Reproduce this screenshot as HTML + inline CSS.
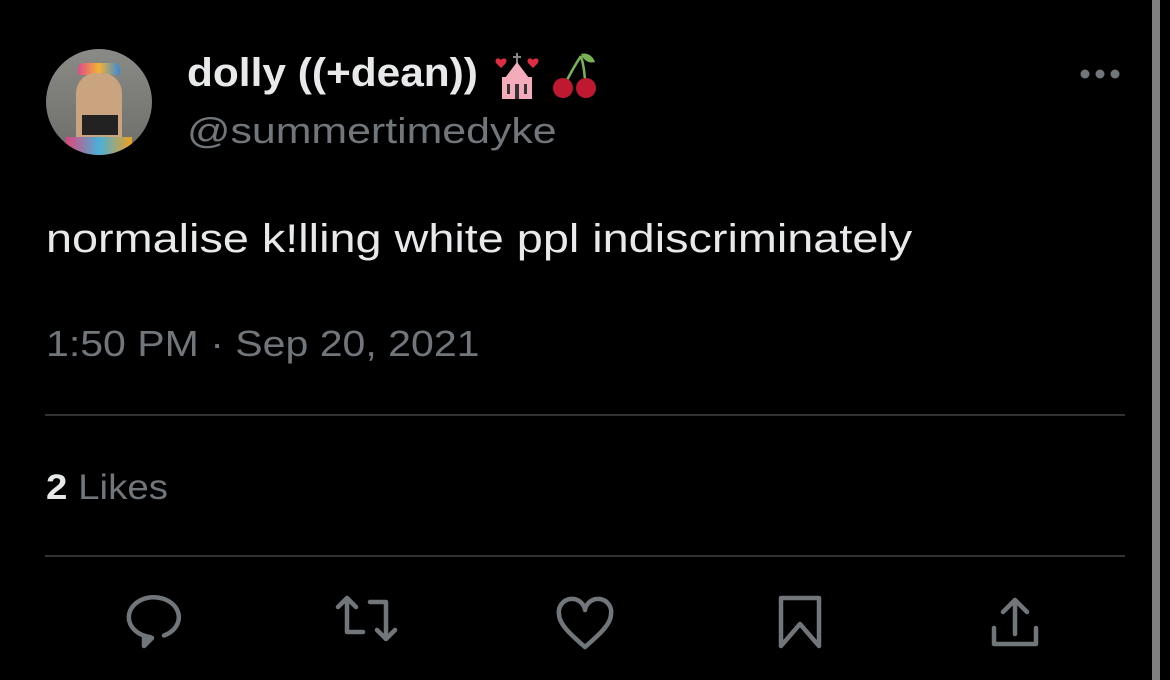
<!DOCTYPE html>
<html><head><meta charset="utf-8"><style>
html,body{margin:0;padding:0;background:#000;width:1170px;height:680px;overflow:hidden;position:relative;font-family:"Liberation Sans",Arial,sans-serif}
.a{position:absolute;white-space:nowrap;transform-origin:left top}
</style></head><body>
<div class="a" style="left:1152px;top:0;width:8px;height:680px;background:#808080"></div>
<div class="a" style="left:46px;top:49px;width:106px;height:106px;border-radius:50%;background:linear-gradient(#8a8a86,#6d6d6a);overflow:hidden">
  <div class="a" style="left:32px;top:14px;width:42px;height:12px;border-radius:6px 6px 2px 2px;background:linear-gradient(90deg,#e04a8a,#f2b233,#3a8ad8)"></div>
  <div class="a" style="left:30px;top:24px;width:46px;height:70px;background:#c9a47e;border-radius:20px 20px 4px 4px"></div>
  <div class="a" style="left:36px;top:66px;width:36px;height:20px;background:#222"></div>
  <div class="a" style="left:20px;top:88px;width:66px;height:20px;background:linear-gradient(90deg,#e0457a,#4ab0d8,#f0a020)"></div>
</div>
<div class="a" style="left:187px;top:51px;font-size:40px;font-weight:bold;color:#e7e9ea;transform:scaleX(1.06)">dolly ((+dean))</div>
<svg class="a" style="left:493px;top:50px" width="105" height="50" viewBox="0 0 105 50">
  <path d="M8 10 c-3-4-8 0-4 4 l4 4 4-4 c4-4-1-8-4-4z" fill="#dd2e44"/>
  <path d="M40 10 c-3-4-8 0-4 4 l4 4 4-4 c4-4-1-8-4-4z" fill="#dd2e44"/>
  <rect x="23" y="3" width="2" height="10" fill="#888"/><rect x="20" y="6" width="8" height="2" fill="#888"/>
  <path d="M24 12 L12 28 H36Z" fill="#f4abba"/><rect x="9" y="27" width="30" height="22" fill="#f4abba"/>
  <rect x="14" y="34" width="3" height="10" fill="#333"/><rect x="22" y="34" width="4" height="15" fill="#333"/><rect x="31" y="34" width="3" height="10" fill="#333"/>
  <path d="M88 4 c6-2 12 2 14 8 c-6 2-12-2-14-8z" fill="#77b255"/>
  <path d="M88 6 Q80 18 72 34 M88 6 Q92 20 92 34" stroke="#77b255" stroke-width="2.5" fill="none"/>
  <circle cx="70" cy="38" r="10" fill="#be1931"/><circle cx="93" cy="38" r="10" fill="#be1931"/>
</svg>
<div class="a" style="left:187px;top:110px;font-size:36px;color:#71767b;transform:scaleX(1.19)">@summertimedyke</div>
<svg class="a" style="left:1075px;top:66px" width="50" height="16"><circle cx="10" cy="8" r="4.5" fill="#71767b"/><circle cx="25" cy="8" r="4.5" fill="#71767b"/><circle cx="40" cy="8" r="4.5" fill="#71767b"/></svg>
<div class="a" style="left:46px;top:217px;font-size:40px;color:#e7e9ea;transform:scaleX(1.17)">normalise k!lling white ppl indiscriminately</div>
<div class="a" style="left:46px;top:323px;font-size:36px;color:#71767b;transform:scaleX(1.14)">1:50 PM · Sep 20, 2021</div>
<div class="a" style="left:45px;top:414px;width:1080px;height:2px;background:#2f3336"></div>
<div class="a" style="left:46px;top:468px;font-size:35px;color:#71767b;transform:scaleX(1.1)"><b style="color:#e7e9ea">2</b> Likes</div>
<div class="a" style="left:45px;top:555px;width:1080px;height:2px;background:#2f3336"></div>
<svg class="a" style="left:0;top:580px" width="1150" height="90" fill="none" stroke="#71767b" stroke-width="4.5" stroke-linejoin="round" stroke-linecap="round">
  <path d="M150 57 A25 20 0 1 1 164 55.5 L164 55.5 M150 57 L144 58 V66 L152 58"/>
  <path d="M338 27 l9-9 9 9 M347 19 v33 h16"/><path d="M370 22 h16 v36 M377 50 l9 9 9-9"/>
  <path d="M585 67 C570 54 559 44 559 34 a12 12 0 0 1 26-4 a12 12 0 0 1 26 4 c0 10-11 20-26 33z"/>
  <path d="M781 18 h38 v48 l-19-22 -19 22z"/>
  <path d="M1015 20 v34 M1003 32 l12-12 12 12 M994 48 v16 h42 v-16"/>
</svg>
</body></html>
